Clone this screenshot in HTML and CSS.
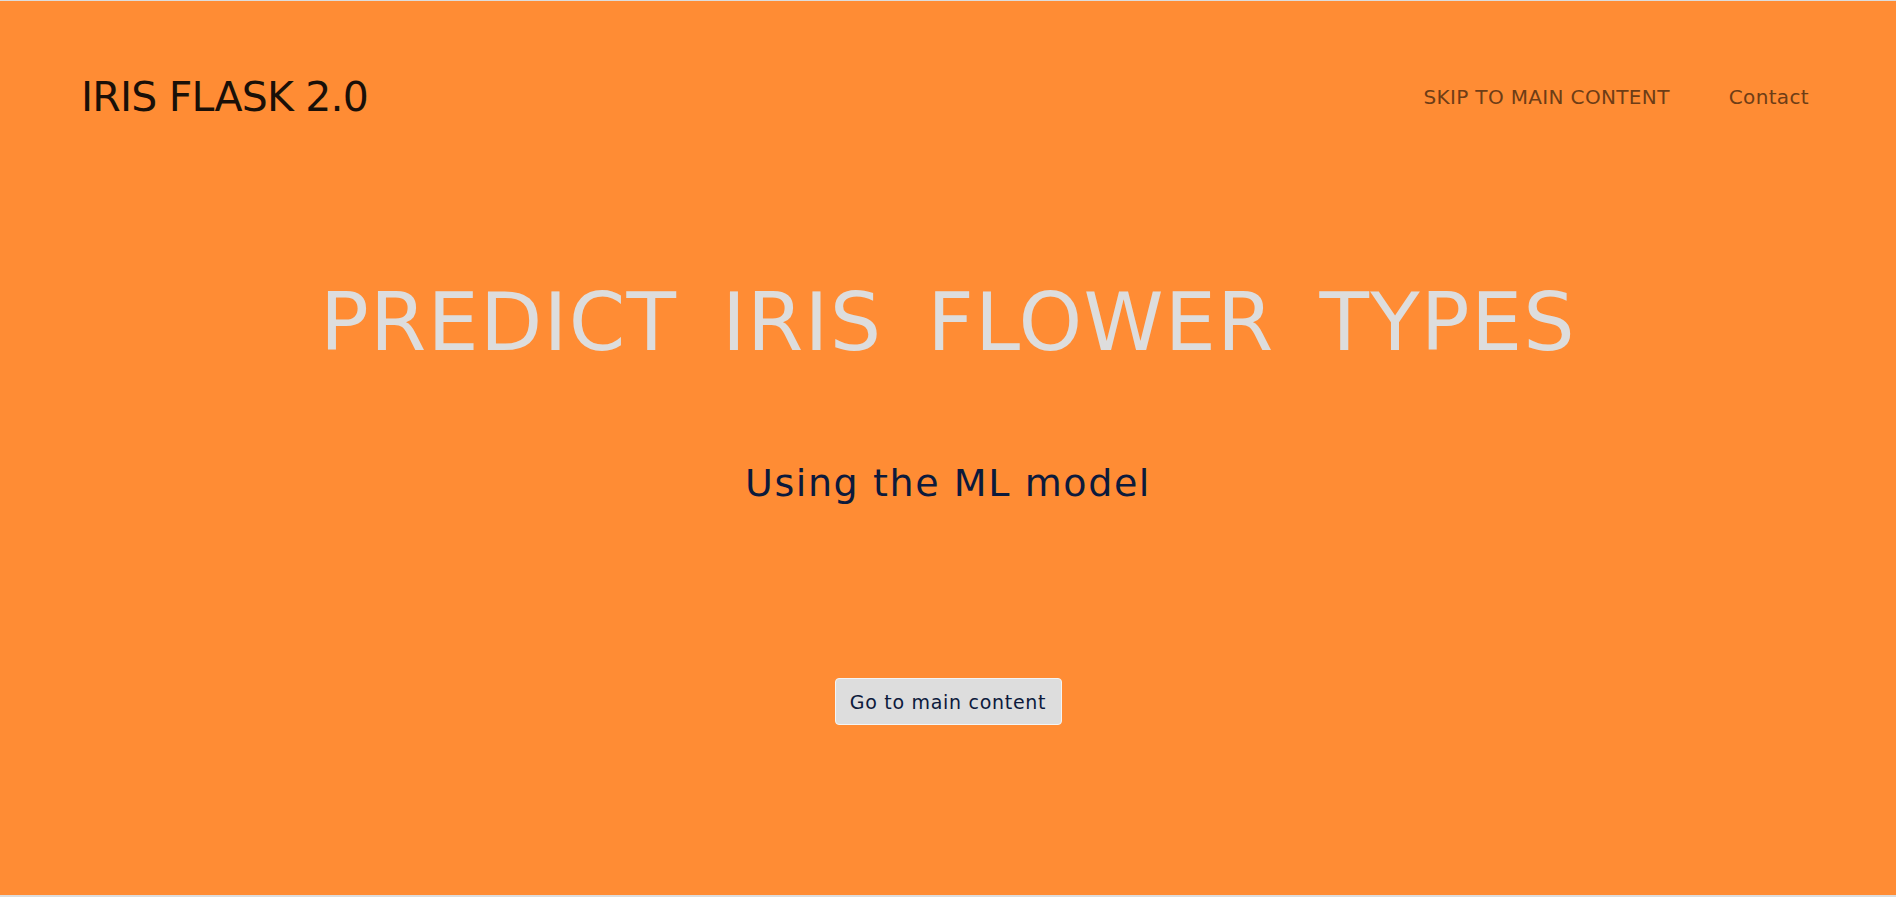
FILE: index.html
```html
<!DOCTYPE html>
<html lang="en">
<head>
<meta charset="utf-8">
<title>Iris Flask 2.0</title>
<link rel="stylesheet" href="styles.css">
</head>
<body>
<section class="hero">
  <header class="topbar">
    <div class="logo">IRIS FLASK 2.0</div>
    <nav class="nav">
      <a class="nav-link" href="#main">SKIP TO MAIN CONTENT</a>
      <a class="nav-link" href="#contact">Contact</a>
    </nav>
  </header>
  <div class="hero-body">
    <h1 class="hero-title">PREDICT IRIS FLOWER TYPES</h1>
    <p class="hero-sub">Using the ML model</p>
    <button class="hero-btn" type="button">Go to main content</button>
  </div>
</section>
</body>
</html>
```

FILE: styles.css
```css
html, body {
  margin: 0;
  padding: 0;
}
body {
  background: #dddddd;
  font-family: "DejaVu Sans", "Open Sans", sans-serif;
  height: 897px;
  overflow: hidden;
}
.hero {
  margin-top: 1px;
  height: 894px;
  background: #ff8c34;
  display: flex;
  flex-direction: column;
}
.topbar {
  display: flex;
  align-items: center;
  justify-content: space-between;
  padding: 76px 87px 0 81px;
}
.logo {
  font-size: 41px;
  line-height: 1;
  color: #1a1008;
  letter-spacing: -0.8px;
}
.nav {
  display: flex;
  gap: 59px;
  margin-top: -1px;
}
.nav-link {
  font-size: 20px;
  line-height: 1;
  color: #6e3d16;
  text-decoration: none;
  letter-spacing: 0.35px;
}
.hero-body {
  display: flex;
  flex-direction: column;
  align-items: center;
}
.hero-title {
  margin: 164px 0 0;
  font-size: 81px;
  line-height: 1;
  font-weight: normal;
  color: #dddddd;
  letter-spacing: 1.2px;
  word-spacing: 18px;
}
.hero-sub {
  margin: 101px 0 0;
  font-size: 38px;
  line-height: 1;
  color: #0c1a3c;
  letter-spacing: 1.6px;
}
.hero-btn {
  margin-top: 176px;
  width: 227px;
  height: 47px;
  background: #dddddd;
  border: 1px solid #f4f4f4;
  border-radius: 4px;
  font-family: inherit;
  font-size: 19px;
  letter-spacing: 0.7px;
  color: #0c1a3c;
  padding: 0;
}
```
